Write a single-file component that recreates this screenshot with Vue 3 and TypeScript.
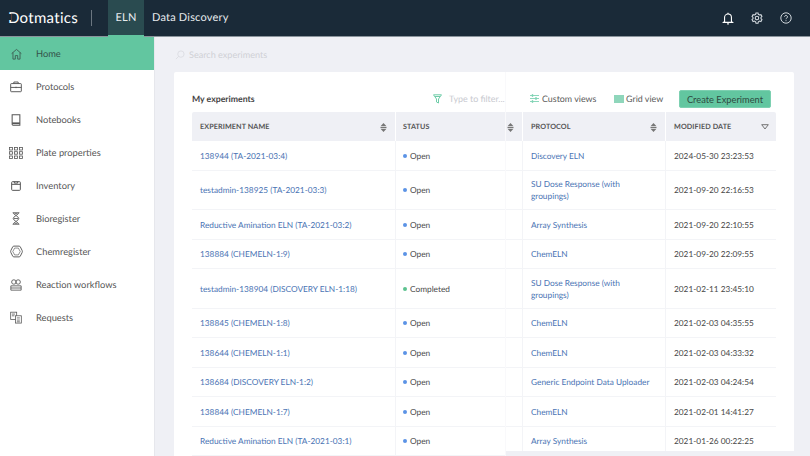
<script setup lang="ts">
interface Row { name: string; status: string; protocol: string; date: string; h: number }
const nav = ['Home','Protocols','Notebooks','Plate properties','Inventory','Bioregister','Chemregister','Reaction workflows','Requests']
const rows: Row[] = [
  { name:'138944 (TA-2021-03:4)', status:'Open', protocol:'Discovery ELN', date:'2024-05-30 23:23:53', h:29.5 },
  { name:'testadmin-138925 (TA-2021-03:3)', status:'Open', protocol:'SU Dose Response (with groupings)', date:'2021-09-20 22:16:53', h:39.5 },
  { name:'Reductive Amination ELN (TA-2021-03:2)', status:'Open', protocol:'Array Synthesis', date:'2021-09-20 22:10:55', h:29.5 },
  { name:'138884 (CHEMELN-1:9)', status:'Open', protocol:'ChemELN', date:'2021-09-20 22:09:55', h:29.5 },
  { name:'testadmin-138904 (DISCOVERY ELN-1:18)', status:'Completed', protocol:'SU Dose Response (with groupings)', date:'2021-02-11 23:45:10', h:39.5 },
  { name:'138845 (CHEMELN-1:8)', status:'Open', protocol:'ChemELN', date:'2021-02-03 04:35:55', h:29.5 },
  { name:'138644 (CHEMELN-1:1)', status:'Open', protocol:'ChemELN', date:'2021-02-03 04:33:32', h:29.5 },
  { name:'138684 (DISCOVERY ELN-1:2)', status:'Open', protocol:'Generic Endpoint Data Uploader', date:'2021-02-03 04:24:54', h:29.5 },
  { name:'138844 (CHEMELN-1:7)', status:'Open', protocol:'ChemELN', date:'2021-02-01 14:41:27', h:29.5 },
  { name:'Reductive Amination ELN (TA-2021-03:1)', status:'Open', protocol:'Array Synthesis', date:'2021-01-26 00:22:25', h:29.5 },
]
</script>

<template>
  <div class="app">
    <header class="top">
      <div class="logo">Dotmatics</div>
      <div class="sep"></div>
      <div class="tab active">ELN</div>
      <div class="tab">Data Discovery</div>
      <div class="top-icons">
        <svg width="12" height="13" viewBox="0 0 14 15" fill="none" stroke="#fff" stroke-width="1.300"><path d="M3 11V6.300a4 4 0 0 1 8 0V11l1.200 1H1.800z"/><path d="M6 13.800h2" stroke-width="1.400"/><path d="M7 .8v1.400"/></svg>
        <svg width="12" height="12" viewBox="0 0 15 15" fill="none" stroke="#d5dbe0" stroke-width="1.300"><path d="M6.200 1.200h2.600l.4 1.700 1.500.9 1.700-.5 1.300 2.300-1.200 1.200v1.600l1.200 1.200-1.300 2.300-1.700-.5-1.500.9-.4 1.700H6.200l-.4-1.700-1.500-.9-1.700.5L1.300 9.600 2.500 8.400V6.800L1.300 5.600l1.300-2.300 1.700.5 1.500-.9z"/><circle cx="7.500" cy="7.600" r="2.200"/></svg>
        <svg width="12" height="12" viewBox="0 0 15 15" fill="none" stroke="#d5dbe0" stroke-width="1.200"><circle cx="7.500" cy="7.500" r="6.500"/><path d="M5.700 6a1.800 1.800 0 1 1 2.800 1.500c-.7.4-1 .8-1 1.500"/><path d="M7.500 10.300v1.200"/></svg>
      </div>
    </header>
    <div class="body">
      <aside class="side">
        <div v-for="(n,i) in nav" :key="n" class="nav" :class="{ on: i===0 }">
          <span class="ic">
            <svg v-if="i===0" width="11" height="12" viewBox="0 0 14 14" fill="none" stroke="#3c5a50" stroke-width="1.100"><path d="M.8 6.500 7 1.200l6.200 5.300"/><path d="M2.500 5.200v8.300h3V9h3v4.500h3V5.200"/></svg>
            <svg v-else-if="i===1" width="12" height="12" viewBox="0 0 14 14" fill="none" stroke="#555" stroke-width="1.100"><rect x=".8" y="3" width="12.400" height="9.500" rx=".8"/><path d="M4.500 3V1.200h5V3M.8 7.500h12.400M7 6.700v1.600"/></svg>
            <svg v-else-if="i===2" width="10" height="12" viewBox="0 0 11 14" fill="none" stroke="#555" stroke-width="1.200"><path d="M1 1h9v12H2a1 1 0 0 1-1-1z"/><path d="M1 10.800h9" stroke-width="2"/></svg>
            <svg v-else-if="i===3" width="14" height="12" viewBox="0 0 14 12" fill="none" stroke="#555" stroke-width=".8"><g><rect x=".5" y=".5" width="3" height="2.500"/><rect x="5.500" y=".5" width="3" height="2.500"/><rect x="10.500" y=".5" width="3" height="2.500"/><rect x=".5" y="4.700" width="3" height="2.500"/><rect x="5.500" y="4.700" width="3" height="2.500"/><rect x="10.500" y="4.700" width="3" height="2.500"/><rect x=".5" y="9" width="3" height="2.500"/><rect x="5.500" y="9" width="3" height="2.500"/><rect x="10.500" y="9" width="3" height="2.500"/></g></svg>
            <svg v-else-if="i===4" width="10" height="10" viewBox="0 0 12 12" fill="none" stroke="#555" stroke-width="1.200"><rect x=".8" y=".8" width="10.400" height="10.400" rx="1"/><path d="M.8 4h10.400M4 .8v1.700h4V.8"/></svg>
            <svg v-else-if="i===5" width="8" height="13" viewBox="0 0 8 14" fill="none" stroke="#666" stroke-width="1"><path d="M.5.800h7M.5 13.200h7M1 .8C1 3 7 4.500 7 7S1 11 1 13.200M7 .8C7 3 1 4.500 1 7s6 4 6 6.200M1.500 7h5M2.500 1.800h3M2.500 12.200h3"/></svg>
            <svg v-else-if="i===6" width="13" height="13" viewBox="0 0 14 14" fill="none" stroke="#555" stroke-width="1" stroke-linejoin="round"><path d="M4.200 1.200h5.600c.6 0 1 .3 1.300.8l2 4c.3.600.3 1.400 0 2l-2 4c-.3.500-.7.800-1.300.8H4.200c-.6 0-1-.3-1.300-.8l-2-4c-.3-.6-.3-1.400 0-2l2-4c.3-.5.700-.8 1.300-.8z"/><path d="M5 3.300h4L11 7l-2 3.700H5L3 7z" stroke-width=".7"/></svg>
            <svg v-else-if="i===7" width="12" height="12" viewBox="0 0 14 14" fill="none" stroke="#555" stroke-width="1"><circle cx="4.500" cy="3.500" r="2.600"/><circle cx="9.500" cy="3.500" r="2.600"/><path d="M1 8h12M1 8v5h12V8M1 10.500h12"/></svg>
            <svg v-else width="12" height="13" viewBox="0 0 14 14" fill="none" stroke="#555" stroke-width=".9"><rect x=".8" y=".8" width="7" height="8.500"/><rect x="6.500" y="5" width="6.700" height="8.500" fill="#fff"/><path d="M2.200 3h3.600M2.200 5h3M8 7.500h3.500M8 10h3.500M8 12h3.500"/></svg>
          </span>
          <span class="lbl">{{ n }}</span>
        </div>
      </aside>
      <main class="main">
        <div class="search">
          <svg width="10" height="10" viewBox="0 0 11 11" fill="none" stroke="#dcdde2" stroke-width="1"><circle cx="6.500" cy="4.500" r="3.500"/><path d="M4 7 1 10"/></svg>
          <span>Search experiments</span>
        </div>
        <section class="card">
          <div class="tools">
            <div class="title">My experiments</div>
            <div class="filter">
              <svg width="9" height="10" viewBox="0 0 9 10" fill="none" stroke="#6fcda9" stroke-width="1"><path d="M.5.800h8L5.500 5v4L3.500 8V5z"/><path d="M2 2.500h5"/></svg>
              <span>Type to filter...</span>
            </div>
            <div class="tool cv">
              <svg width="9" height="9" viewBox="0 0 9 9" fill="none" stroke="#7fd3b4" stroke-width=".9"><path d="M0 1.500h9M0 4.500h9M0 7.500h9"/><path d="M2 .5h1v2H2zM5.500 3.500h1v2h-1zM2 6.500h1v2H2z" fill="#7fd3b4" stroke-width=".6"/></svg>
              <span>Custom views</span>
            </div>
            <div class="tool gv">
              <span class="gicon"></span>
              <span>Grid view</span>
            </div>
            <button class="create">Create Experiment</button>
          </div>
          <div class="table">
            <div class="tr head">
              <div class="c c1">EXPERIMENT NAME<svg class="sort" width="7" height="9" viewBox="0 0 7 9" fill="#777"><path d="M3.500 0 6.500 3.300H.5zM3.500 9 .5 5.700h6zM.5 4h6v1h-6z" /></svg></div>
              <div class="c c2">STATUS<svg class="sort" width="7" height="9" viewBox="0 0 7 9" fill="#777"><path d="M3.500 0 6.500 3.300H.5zM3.500 9 .5 5.700h6zM.5 4h6v1h-6z" /></svg></div>
              <div class="c c3">PROTOCOL<svg class="sort" width="7" height="9" viewBox="0 0 7 9" fill="#777"><path d="M3.500 0 6.500 3.300H.5zM3.500 9 .5 5.700h6zM.5 4h6v1h-6z" /></svg></div>
              <div class="c c4">MODIFIED DATE<svg class="down" width="8" height="6" viewBox="0 0 8 6" fill="none" stroke="#666" stroke-width=".9"><path d="M.7.700h6.600L4 5z"/></svg></div>
            </div>
            <div v-for="r in rows" :key="r.name" class="tr" :style="{ height: r.h + 'px' }">
              <div class="c c1 link">{{ r.name }}</div>
              <div class="c c2"><i class="dot" :class="{ done: r.status==='Completed' }"></i>{{ r.status }}</div>
              <div class="c c3 link">{{ r.protocol }}</div>
              <div class="c c4">{{ r.date }}</div>
            </div>
          </div>
        </section>
        <div class="hscroll"></div>
      </main>
    </div>
  </div>
</template>

<style>
html, body { margin: 0; overflow: hidden; }
</style>
<style scoped>
.app { width: 810px; height: 456px; overflow: hidden; display: flex; flex-direction: column; font-family: Lato, "Open Sans", sans-serif; color: #4a4a4a; text-rendering: geometricPrecision; }
.top { height: 36px; flex: none; background: #1a2a38; display: flex; align-items: stretch; color: #e8ecef; font-size: 11px; border-bottom: 1px solid #8a949c; }
.logo { position: relative; width: 83px; padding-left: 8px; font-size: 15px; line-height: 36px; color: #fff; letter-spacing: .3px; box-sizing: content-box; }
.logo::before { content: ""; position: absolute; left: 8px; top: 14px; width: 3px; height: 6px; background: #1a2a38; }
.sep { width: 1px; height: 16px; background: #6b7680; margin: 10px 16px 0 0; }
.tab { padding: 0 8px; line-height: 36px; letter-spacing: .2px; }
.tab.active { width: 36px; box-sizing: border-box; padding: 0; text-align: center; background: #2a4b50; border-bottom: 2px solid #62c6a0; margin-bottom: -1px; }
.top-icons { margin-left: auto; display: flex; align-items: center; gap: 17px; padding-right: 18px; }
.body { flex: 1; display: flex; min-height: 0; }
.side { width: 154px; flex: none; background: #fff; border-right: 1px solid #e6e7ec; }
.nav { height: 33px; display: flex; align-items: center; font-size: 9.300px; color: #555; }
.nav.on { background: #62c6a0; color: #34524a; }
.ic { width: 36px; flex: none; display: flex; align-items: center; justify-content: center; padding-right: 4px; box-sizing: border-box; }
.main { position: relative; flex: 1; background: #eff0f5; min-width: 0; padding: 0 16px 0 19px; }
.search { height: 35px; display: flex; align-items: center; gap: 4px; font-size: 9.100px; color: #cfd0d6; padding-left: 1px; }
.card { background: #fff; border-radius: 2px; padding: 0 18px; height: 400px; overflow: hidden; position: relative; }
.card::after { content: ""; position: absolute; left: 331px; top: 0; bottom: 0; width: 1px; background: #f9f9fb; }
.tools { height: 40px; display: flex; align-items: flex-end; font-size: 8.900px; position: relative; }
.title { font-weight: 700; font-size: 8.700px; color: #444; width: 241px; padding-bottom: 8px; }
.filter { width: 97px; padding-bottom: 8px; display: flex; align-items: center; gap: 7px; color: #c8c9cf; box-sizing: border-box; }
.tool { display: flex; align-items: center; gap: 3px; padding-bottom: 8px; color: #5a5a5a; }
.cv { width: 84px; }
.gv { width: 65px; gap: 2px; }
.gicon { width: 10px; height: 8px; background: #8fd6bb; }
.create { width: 92px; height: 18px; padding: 0; border: 1px solid #7dd0b1; border-radius: 2px; background: #62c6a0; color: #2f4a40; font: inherit; font-size: 9.300px; margin-bottom: 4px; }
.table { width: 584px; }
.tr { display: grid; grid-template-columns: 203px 127px 143px 111px; border-bottom: 1px solid #f3f4f7; box-sizing: border-box; }
.head { height: 29px; background: #eff0f5; font-weight: 700; color: #555; border-bottom: 0; border-radius: 2px 2px 0 0; }
.c { position: relative; display: flex; align-items: center; padding: 1px 8px 0; font-size: 8.300px; border-left: 1px solid #f3f4f7; box-sizing: border-box; line-height: 12px; }
.c1 { border-left: 0; }
.c2 { padding-left: 7px; }
.c3 { padding-right: 12px; }
.head .c { font-size: 7.200px; border-left-color: #fff; letter-spacing: .1px; padding-top: 0; }
.link { color: #4a74b4; }
.dot { width: 4px; height: 4px; border-radius: 50%; background: #5b93e6; margin-right: 3px; }
.dot.done { background: #5cc28f; }
.sort { position: absolute; right: 8px; top: 50%; margin-top: -4px; }
.down { position: absolute; right: 7px; top: 50%; margin-top: -3px; }
.hscroll { position: absolute; left: 351px; right: 0; bottom: 0; height: 5px; background: #eff0f5; }
</style>
